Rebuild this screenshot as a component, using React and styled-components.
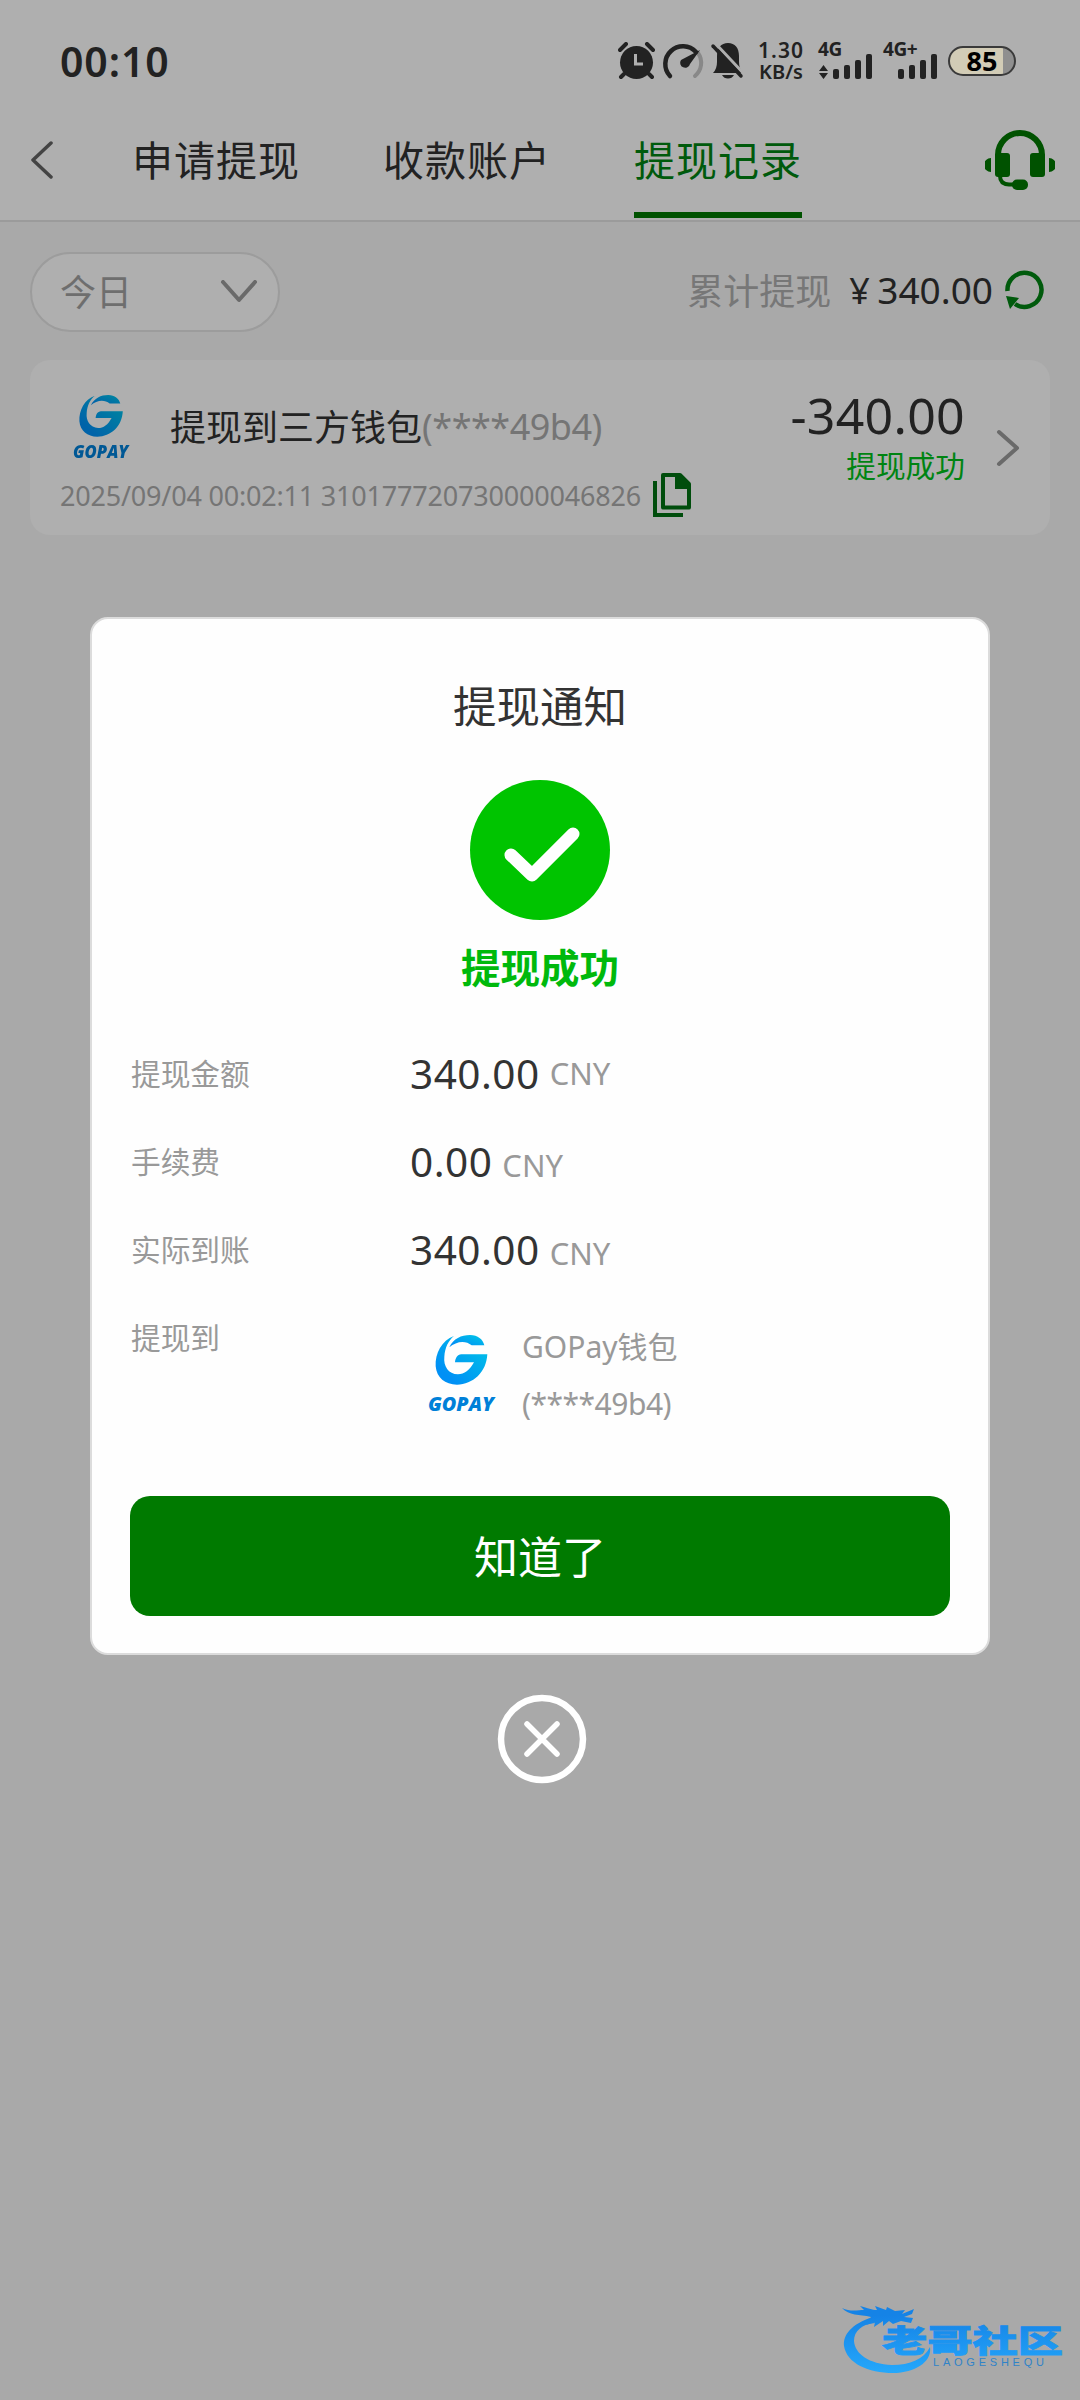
import React from 'react'
import styled, { createGlobalStyle } from 'styled-components'

const GlobalStyle = createGlobalStyle`
  body {
    margin: 0;
    background: #a9a9a9;
    font-family: "Noto Sans", "Noto Sans CJK SC", sans-serif;
  }
  * {
    box-sizing: border-box;
  }
  svg {
    display: block;
    flex: none;
  }
`
const Screen = styled.div`
  position: relative;
  width: 1080px;
  height: 2400px;
  overflow: hidden;
  color: #222;
  white-space: nowrap;
`
const StatusBar = styled.div`
  display: flex;
  align-items: center;
  height: 122px;
  padding: 0 64px 0 60px;
  background: #afafaf;
`
const Clock = styled.div`
  flex: 1;
  font-size: 41px;
  font-weight: 600;
  letter-spacing: 0.9px;
  line-height: 50px;
`
const Speed = styled.div`
  width: 48px;
  margin-left: 13px;
  font-size: 21px;
  font-weight: 600;
  line-height: 21px;
  text-align: center;
  div:first-child {
    letter-spacing: 1px;
  }
  div:last-child {
    font-size: 20px;
  }
`
const Signal = styled.div`
  display: flex;
  flex-direction: column;
  width: 56px;
  height: 38px;
  margin-left: ${props => props.$gap}px;
`
const SignalName = styled.div`
  height: 12px;
  font-size: 19px;
  font-weight: 700;
  line-height: 14px;
  letter-spacing: -0.4px;
`
const Battery = styled.div`
  width: 68px;
  height: 30px;
  margin-left: 9px;
  border: 2px solid #3a3a3a;
  border-radius: 15px;
  background: linear-gradient(90deg, #d2ccb6 53px, #8f8f8f 53px);
  color: #000;
  font-size: 27px;
  font-weight: 700;
  line-height: 25px;
  text-align: center;
`
const NavBar = styled.div`
  display: flex;
  height: 100px;
  padding: 0 25px 0 30px;
  background: #afafaf;
  border-bottom: 2px solid #9b9b9b;
`
const BackIcon = styled.svg`
  margin: 19px 78px 0 0;
`
const Tab = styled.div`
  width: 168px;
  height: 96px;
  margin-right: 83px;
  border-bottom: 6px solid ${props => props.$active ? '#005200' : 'transparent'};
  color: ${props => props.$active ? '#005a0c' : '#222'};
  font-size: 41px;
  letter-spacing: 1px;
  line-height: 76px;
`
const HeadsetIcon = styled.svg`
  margin: 8px 0 0 auto;
`
const Content = styled.div`
  padding: 30px 30px;
`
const FilterRow = styled.div`
  display: flex;
  align-items: center;
  height: 80px;
`
const Picker = styled.div`
  display: flex;
  align-items: center;
  justify-content: space-between;
  width: 250px;
  height: 80px;
  padding: 0 20px 4px 28px;
  background: #afafaf;
  border: 2px solid #9c9c9c;
  border-radius: 40px;
  color: #6e6e6e;
  font-size: 36px;
  svg {
    position: relative;
    top: 2px;
  }
`
const TotalLabel = styled.div`
  margin: -5px 0 0 auto;
  color: #777;
  font-size: 36px;
`
const TotalValue = styled.div`
  display: flex;
  align-items: baseline;
  margin: -5px 9px 0 18px;
  font-size: 37px;
  span {
    width: 28px;
    font-size: 36px;
  }
`
const RefreshIcon = styled.svg`
  margin: -4px 4px 0 0;
`
const Card = styled.div`
  display: flex;
  height: 175px;
  margin-top: 28px;
  padding: 0 30px;
  background: #afafaf;
  border-radius: 20px;
`
const CardMain = styled.div`
  flex: 1;
`
const CardTitle = styled.div`
  display: flex;
  align-items: center;
  height: 92px;
  margin-top: 20px;
  font-size: 36px;
  span {
    margin-top: -1px;
  }
`
const CardAccount = styled.div`
  color: #757575;
  font-size: 36px;
  letter-spacing: -0.5px;
`
const CardMeta = styled.div`
  display: flex;
  align-items: center;
  height: 44px;
  margin-top: 1px;
  color: #757575;
  font-size: 27px;
  letter-spacing: -0.2px;
  svg {
    margin-left: 12px;
  }
`
const CardLogo = styled.div`
  margin: 0 29px 0 -3px;
  filter: brightness(0.69);
`
const CardAmount = styled.div`
  text-align: right;
  padding-top: 25px;
`
const Amount = styled.div`
  font-size: 50px;
  letter-spacing: 0.3px;
  line-height: 60px;
`
const AmountState = styled.div`
  margin-top: 4px;
  color: #008412;
  font-size: 29.7px;
  line-height: 34px;
`
const CardArrow = styled.svg`
  margin: 69px 0 0 31px;
`
const Overlay = styled.div`
  position: absolute;
  inset: 0;
  display: flex;
  flex-direction: column;
  align-items: center;
  padding-top: 617px;
`
const Modal = styled.div`
  display: flex;
  flex-direction: column;
  align-items: center;
  width: 900px;
  height: 1038px;
  padding: 58px 38px 0;
  background: #fefefe;
  border: 2px solid #dcdcdc;
  border-radius: 18px;
`
const ModalTitle = styled.div`
  color: #333;
  font-size: 43.5px;
  line-height: 58px;
  margin-bottom: 2px;
`
const SuccessIcon = styled.svg`
  margin-top: 43px;
`
const SuccessText = styled.div`
  margin: 23px 0 37px;
  color: #00b90c;
  font-size: 39.5px;
  font-weight: 700;
  line-height: 50px;
`
const InfoRow = styled.div`
  display: grid;
  grid-template-columns: 279px 1fr;
  width: 818px;
  height: ${props => props.$tall ? 202 : 88}px;
  color: #999;
  font-size: 29.7px;
`
const InfoLabel = styled.div`
  height: 88px;
  line-height: 88px;
`
const InfoValue = styled.div`
  display: flex;
  align-items: baseline;
  line-height: 88px;
  b {
    margin-right: 10px;
    color: #333;
    font-size: 40.5px;
    font-weight: 400;
    letter-spacing: 0.5px;
  }
  i {
    position: relative;
    top: ${props => props.$raised ? -4 : 0}px;
    font-size: 31px;
    font-style: normal;
  }
`
const Wallet = styled.div`
  display: flex;
  margin-left: -1px;
  padding-top: 28px;
`
const WalletText = styled.div`
  margin: -4px 0 0 13px;
  font-size: 30px;
  line-height: 57px;
  span {
    font-size: 30px;
  }
  div {
    letter-spacing: -0.5px;
  }
`
const OkButton = styled.button`
  width: 820px;
  height: 120px;
  padding: 0 0 3px;
  border: none;
  border-radius: 20px;
  background: #007a00;
  color: #fff;
  font-family: inherit;
  font-size: 44px;
`
const CloseIcon = styled.svg`
  margin: 39px 0 0 3px;
`
const Watermark = styled.svg`
  position: absolute;
  left: 835px;
  top: 2295px;
`

const GopayLogo = ({ size }) => (
  <svg width={size} height={size} viewBox="30 40 300 300">
    <defs>
      <linearGradient id="gopay" x1="0" y1="1" x2="1" y2="0">
        <stop offset="0.2" stopColor="#0090f5" />
        <stop offset="1" stopColor="#00c8e6" />
      </linearGradient>
    </defs>
    <path fill="url(#gopay)" d="M165 82 C128 95 108 135 110 173 C113 207 138 228 174 228 C222 227 262 192 265 137 L187 137 C175 138 169 148 168 161 L225 161 C212 185 196 197 177 197 C148 196 133 172 136 144 C138 116 148 96 165 82 Z" />
    <path fill="url(#gopay)" d="M151 116 C163 90 187 79 213 79 C237 80 251 91 256 110 L218 110 C200 94 172 97 151 116 Z" />
    <text x="87" y="306" textLength="198" lengthAdjust="spacingAndGlyphs" fontFamily="Open Sans" fontSize="60" fontWeight="800" fontStyle="italic" fill="#0080d8">GOPAY</text>
  </svg>
)

const Bars = ({ arrows }) => (
  <svg width="56" height="26" viewBox="0 0 56 26" fill="#222">
    {arrows && <path d="M5.5 11 L10 17 H1 Z M5.5 25 L10 19 H1 Z" />}
    <rect x="15" y="15" width="6" height="10" rx="2" />
    <rect x="26" y="11" width="6" height="14" rx="2" />
    <rect x="37" y="6" width="6" height="19" rx="2" />
    <rect x="48" y="0" width="6" height="25" rx="2" />
  </svg>
)

const StatusIcons = () => (
  <svg width="126" height="38" viewBox="0 0 126 38" fill="#222">
    <circle cx="18.5" cy="20.5" r="16.5" />
    <path d="M2 8 L8 2 M35 8 L29 2 M6 32 L3 35 M31 32 L34 35" stroke="#222" strokeWidth="4" strokeLinecap="round" />
    <path d="M17.5 12 V22 H25" fill="none" stroke="#afafaf" strokeWidth="3" />
    <path d="M80 11 A17 17 0 0 1 77 34" fill="none" stroke="#888" strokeWidth="4" strokeLinecap="round" />
    <path d="M52 34 A17.5 17.5 0 1 1 78 10" fill="none" stroke="#222" strokeWidth="4.5" strokeLinecap="round" />
    <path d="M82 8 L72 22 A5 5 0 1 1 63 18 Z" />
    <path d="M95 31 Q99 27 99 20 V14 C99 6 103 1 110 1 C117 1 121 6 121 14 V20 Q121 27 125 31 Z M104 33 H116 Q114 36.500 110 36.500 Q106 36.500 104 33 Z" />
    <path d="M98 2 L127 33" stroke="#afafaf" strokeWidth="3" />
    <path d="M95 4 L123 34" stroke="#222" strokeWidth="3.5" strokeLinecap="round" />
  </svg>
)

const rows = [
  { label: '提现金额', value: '340.00', raised: true },
  { label: '手续费', value: '0.00' },
  { label: '实际到账', value: '340.00' },
]

const App = () => {
  return (
    <Screen>
      <GlobalStyle />
      <StatusBar>
        <Clock>00:10</Clock>
        <StatusIcons />
        <Speed>
          <div>1.30</div>
          <div>KB/s</div>
        </Speed>
        <Signal $gap={13}>
          <SignalName>4G</SignalName>
          <Bars arrows />
        </Signal>
        <Signal $gap={9}>
          <SignalName>4G+</SignalName>
          <Bars />
        </Signal>
        <Battery>85</Battery>
      </StatusBar>
      <NavBar>
        <BackIcon width="24" height="38" viewBox="0 0 24 38">
          <path d="M21 2 L3 19 L21 36" fill="none" stroke="#444" strokeWidth="3.5" strokeLinecap="round" strokeLinejoin="round" />
        </BackIcon>
        <Tab>申请提现</Tab>
        <Tab>收款账户</Tab>
        <Tab $active>提现记录</Tab>
        <HeadsetIcon width="70" height="60" viewBox="0 0 70 60" fill="#005200">
          <path d="M13 27 V25 A22 22 0 0 1 57 25 V27" fill="none" stroke="#005200" strokeWidth="6" />
          <rect x="10" y="23" width="15" height="24" rx="3" />
          <rect x="45" y="23" width="15" height="24" rx="3" />
          <path d="M6 28 V42 A7 7 0 0 1 6 28 Z M64 28 V42 A7 7 0 0 0 64 28 Z" />
          <path d="M15 46 Q15 54 24 54.500 H32" fill="none" stroke="#005200" strokeWidth="4" />
          <rect x="27" y="49.500" width="16" height="10.500" rx="5" />
        </HeadsetIcon>
      </NavBar>
      <Content>
        <FilterRow>
          <Picker>
            今日
            <svg width="38" height="24" viewBox="0 0 38 24">
              <path d="M3 2 L19 20 L35 2" fill="none" stroke="#6a6a6a" strokeWidth="4" strokeLinecap="round" strokeLinejoin="round" />
            </svg>
          </Picker>
          <TotalLabel>累计提现</TotalLabel>
          <TotalValue><span>¥</span>340.00</TotalValue>
          <RefreshIcon width="44" height="40" viewBox="0 0 44 40">
            <path d="M5.500 21 A17 17 0 1 1 13 34" fill="none" stroke="#005a0c" strokeWidth="4.500" />
            <path d="M4 26 L17 28 L8 39 Z" fill="#005a0c" />
          </RefreshIcon>
        </FilterRow>
        <Card>
          <CardMain>
            <CardTitle>
              <CardLogo><GopayLogo size={84} /></CardLogo>
              <span>提现到三方钱包</span>
              <CardAccount>(****49b4)</CardAccount>
            </CardTitle>
            <CardMeta>
              2025/09/04 00:02:11 310177720730000046826
              <svg width="38" height="44" viewBox="0 0 38 44">
                <path d="M2 8 V42 H30" fill="none" stroke="#004d0c" strokeWidth="4" />
                <path d="M10 2 H27 L36 11 V34.500 H10 Z" fill="none" stroke="#004d0c" strokeWidth="4" strokeLinejoin="round" />
                <path d="M22 1 H27 L37 11 V16 H22 Z" fill="#004d0c" />
              </svg>
            </CardMeta>
          </CardMain>
          <CardAmount>
            <Amount>-340.00</Amount>
            <AmountState>提现成功</AmountState>
          </CardAmount>
          <CardArrow width="24" height="38" viewBox="0 0 24 38">
            <path d="M3 3 L21 19 L3 35" fill="none" stroke="#6a6a6a" strokeWidth="4" strokeLinecap="round" strokeLinejoin="round" />
          </CardArrow>
        </Card>
      </Content>
      <Overlay>
        <Modal>
          <ModalTitle>提现通知</ModalTitle>
          <SuccessIcon width="140" height="140" viewBox="0 0 140 140">
            <circle cx="70" cy="70" r="70" fill="#00c400" />
            <path d="M41 75 L62 95 L103 54" fill="none" stroke="#fff" strokeWidth="13" strokeLinecap="round" strokeLinejoin="round" />
          </SuccessIcon>
          <SuccessText>提现成功</SuccessText>
          {rows.map(row => (
            <InfoRow key={row.label}>
              <InfoLabel>{row.label}</InfoLabel>
              <InfoValue $raised={row.raised}><b>{row.value}</b><i>CNY</i></InfoValue>
            </InfoRow>
          ))}
          <InfoRow $tall>
            <InfoLabel>提现到</InfoLabel>
            <Wallet>
              <GopayLogo size={100} />
              <WalletText>
                GOPay<span>钱包</span>
                <div>(****49b4)</div>
              </WalletText>
            </Wallet>
          </InfoRow>
          <OkButton>知道了</OkButton>
        </Modal>
        <CloseIcon width="90" height="90" viewBox="0 0 90 90" fill="none" stroke="#fff">
          <circle cx="45" cy="45" r="41" strokeWidth="6.500" />
          <path d="M30 30 L60 60 M60 30 L30 60" strokeWidth="5.500" strokeLinecap="round" />
        </CloseIcon>
      </Overlay>
      <Watermark width="240" height="90" viewBox="0 0 240 90">
        <defs>
          <linearGradient id="water" gradientUnits="userSpaceOnUse" x1="0" y1="14" x2="0" y2="78">
            <stop offset="0.1" stopColor="#1583e6" />
            <stop offset="1" stopColor="#25a8fb" />
          </linearGradient>
        </defs>
        <g fill="url(#water)">
          <path d="M38 22 C16 29 8 40 9 51 C12 69 35 79 62 78 C84 76 97 65 95 52 C89 64 75 70 57 70 C34 69 20 59 19 46 C19 36 27 29 40 28 Z" />
          <path d="M7 13 C15 17 23 15 29 15 L25 11 C33 13 37 15 42 15 L40 11 L51 15 L52 12 L60 16 L70 15 L67 19 L79 14 L77 19 L69 22 L78 23 L76 28 L66 26 L58 29 L54 26 L48 31 L48 26 L39 32 L40 27 L31 30 L36 22 C24 19 14 21 7 13 Z" />
          <text x="47" y="57" textLength="181" lengthAdjust="spacingAndGlyphs" fontFamily="Noto Sans CJK SC" fontSize="31" fontWeight="900" stroke="url(#water)" strokeWidth="0.8">老哥社区</text>
          <text x="98" y="71" textLength="111" lengthAdjust="spacing" fontFamily="Liberation Sans" fontSize="11" fill="#3083c8">LAOGESHEQU</text>
        </g>
      </Watermark>
    </Screen>
  )
}

export default App
